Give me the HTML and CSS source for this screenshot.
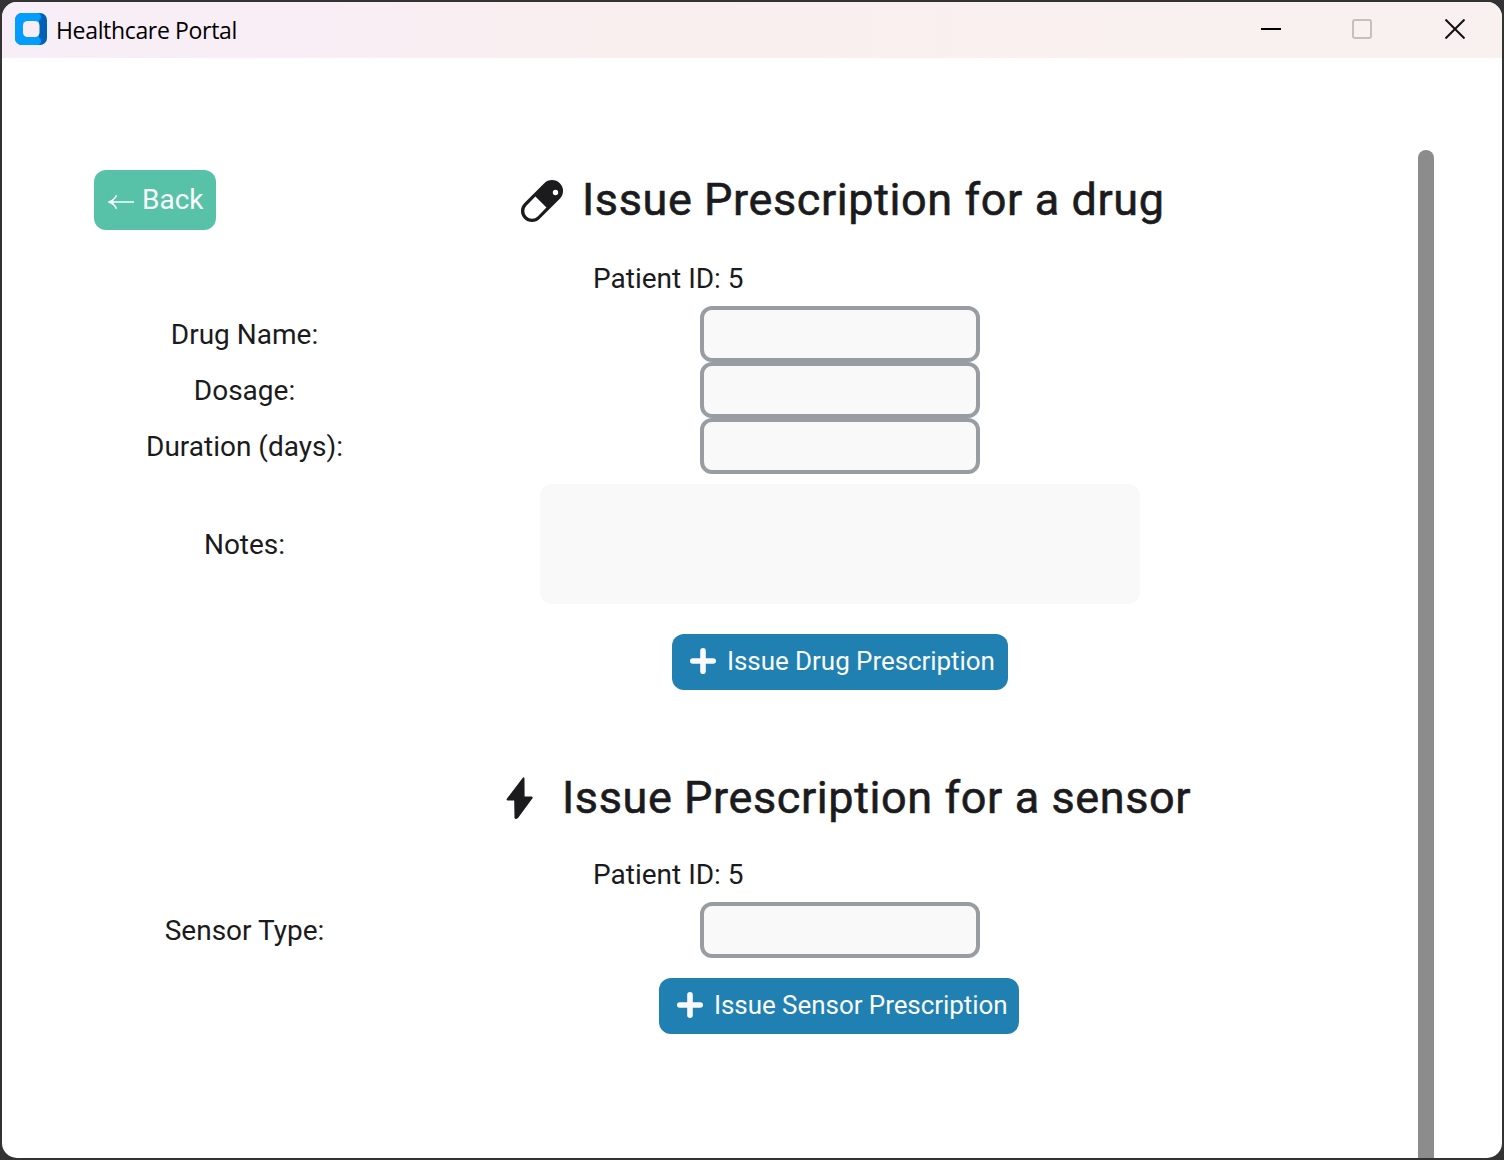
FILE: index.html
```html
<!DOCTYPE html>
<html lang="en">
<head>
<meta charset="utf-8">
<title>Healthcare Portal</title>
<link rel="stylesheet" href="styles.css">
</head>
<body>
<div class="window">
  <header class="titlebar">
    <svg class="app-icon" width="32" height="32" viewBox="0 0 32 32">
      <rect width="32" height="32" rx="7" fill="#0062b5"/>
      <path d="M7 0H22a4 4 0 0 1 4 4a4 4 0 0 1-2 3.500V24.500a4 4 0 0 1 2 3.500a4 4 0 0 1-4 4H7a7 7 0 0 1-7-7V7a7 7 0 0 1 7-7Z" fill="#039dff"/>
      <rect x="8" y="8" width="16.500" height="16" rx="4.500" fill="#f8edf5"/>
    </svg>
    <span class="app-name">Healthcare Portal</span>
    <div class="controls">
      <svg width="20" height="20" viewBox="0 0 20 20"><path d="M0 10H20" stroke="#000" stroke-width="2"/></svg>
      <svg class="maximize" width="20" height="20" viewBox="0 0 20 20"><rect x="1" y="1" width="18" height="18" rx="2" fill="none" stroke="#c6bfc0" stroke-width="2"/></svg>
      <svg width="20" height="20" viewBox="0 0 20 20"><path d="M.5.5l19 19M19.500.5l-19 19" stroke="#111" stroke-width="2"/></svg>
    </div>
  </header>
  <div class="body">
    <main class="form">
      <div class="row head">
        <div class="side left"><button class="back"><svg width="26" height="16" viewBox="0 0 26 16"><path d="M1.500 8H26M8.500 1.200Q6.500 6 1 8Q6.500 10 8.500 14.800" fill="none" stroke="#fafafa" stroke-width="1.500"/><path d="M0.500 8L5.500 5V11Z" fill="#fafafa"/></svg><span>Back</span></button></div>
        <h1 class="title drug"><svg width="44" height="44" viewBox="0 0 44 44"><g transform="rotate(-45 22 22)"><rect x="-3.200" y="11" width="50.400" height="22" rx="11" fill="#1b1b1d"/><path d="M20.500 14.200H8a7.800 7.800 0 0 0 0 15.600H20.500Z" fill="#fff"/></g><circle cx="35.500" cy="13.500" r="2.700" fill="#fff"/></svg><span>Issue Prescription for a drug</span></h1>
      </div>
      <div class="row"><div class="side"></div><p class="patient">Patient ID: 5</p></div>
      <div class="row"><label class="side">Drug Name:</label><div class="field"><input class="entry"></div></div>
      <div class="row"><label class="side">Dosage:</label><div class="field"><input class="entry"></div></div>
      <div class="row"><label class="side">Duration (days):</label><div class="field"><input class="entry"></div></div>
      <div class="row notes-row"><label class="side">Notes:</label><div class="field"><textarea class="notes"></textarea></div></div>
      <div class="row action-drug"><div class="side"></div><div class="field"><button class="action drug-btn"><svg width="26" height="26" viewBox="0 0 26 26"><path d="M13 2.800V23.200M2.800 13H23.200" stroke="#fafafa" stroke-width="5.600" stroke-linecap="round"/></svg><span>Issue Drug Prescription</span></button></div></div>
      <div class="row head second"><div class="side"></div>
        <h2 class="title sensor"><svg width="28" height="42" viewBox="0 0 28 42"><path d="M17 0.500Q18.500-.5 18.500 2L18.600 19.500H25.500Q27.500 20 26.300 21.500L12 41Q9.500 42.800 8.500 41L8.200 23.500H1.500Q0 23 .8 21.700Z" fill="#1b1b1d"/></svg><span>Issue Prescription for a sensor</span></h2>
      </div>
      <div class="row"><div class="side"></div><p class="patient">Patient ID: 5</p></div>
      <div class="row"><label class="side">Sensor Type:</label><div class="field"><input class="entry"></div></div>
      <div class="row action-sensor"><div class="side"></div><div class="field"><button class="action sensor-btn"><svg width="26" height="26" viewBox="0 0 26 26"><path d="M13 2.800V23.200M2.800 13H23.200" stroke="#fafafa" stroke-width="5.600" stroke-linecap="round"/></svg><span>Issue Sensor Prescription</span></button></div></div>
    </main>
    <div class="scrollbar"></div>
  </div>
</div>
</body>
</html>
```
FILE: styles.css
```css
* { box-sizing: border-box; }
body { margin: 0; padding: 2px; height: 1160px; overflow: hidden; background: #343334; font-family: Roboto, sans-serif; font-size: 28px; color: #1b1b1d; }
svg { display: block; flex: none; }
button { border: 0; margin: 0; font: inherit; color: #fafafa; display: flex; align-items: center; white-space: nowrap; }
.window { width: 1500px; height: 1156px; background: #fff; border-radius: 15px; overflow: hidden; }
.titlebar { height: 56px; display: flex; align-items: center; padding: 0 37px 2px 13px; background: linear-gradient(90deg, #f7eef7 0, #f9eef5 20%, #f9efef 40%, #f9f0f0 100%); }
.app-name { margin: 2px 0 0 9px; font: 23px "Open Sans", sans-serif; letter-spacing: -0.34px; color: #000; white-space: nowrap; }
.controls { margin-left: auto; display: flex; gap: 71px; }
.maximize { margin-right: 2px; }
.body { height: 1100px; display: flex; justify-content: space-between; padding: 92px 68px 0 92px; }
.form { width: 1192px; }
.scrollbar { width: 16px; background: #8c8c8c; border-radius: 8px 8px 0 0; }
.row { display: grid; grid-template-columns: 301px 890px; height: 56px; align-items: center; }
.row.head { height: 100px; }
.side { text-align: center; }
.side.left { text-align: left; }
.field { display: flex; justify-content: center; }
.back { width: 122px; height: 60px; padding: 0 14px 2px; gap: 8px; border-radius: 12px; background: #58c2a9; }
.back svg { margin-top: 6px; }
.title { margin: 0; display: flex; align-items: center; font-size: 45px; font-weight: 400; letter-spacing: 0.6px; -webkit-text-stroke: 0.6px #1b1b1d; white-space: nowrap; }
.title span { margin-top: -2px; }
.title.drug { padding-left: 125px; gap: 18px; }
.title.sensor { padding-left: 111px; gap: 28px; }
.title.drug svg { margin-top: 2px; }
.patient { margin: 0; padding-left: 198px; }
.entry { display: block; width: 280px; height: 56px; border: 4px solid #979da2; border-radius: 12px; background: #f9f9fa; outline: 0; }
.row.notes-row { height: 120px; margin-top: 10px; }
.notes { display: block; width: 600px; height: 120px; border: 0; border-radius: 12px; background: #f9f9fa; resize: none; }
.row.action-drug { margin-top: 30px; }
.row.action-sensor { margin-top: 20px; }
.action { height: 56px; border-radius: 12px; background: #1f80b1; padding: 0 0 2px 18px; gap: 11px; font-size: 26px; letter-spacing: -0.06px; }
.drug-btn { width: 336px; }
.sensor-btn { width: 360px; margin-right: 2px; }
.row.second { margin-top: 58px; margin-bottom: -2px; }
```
